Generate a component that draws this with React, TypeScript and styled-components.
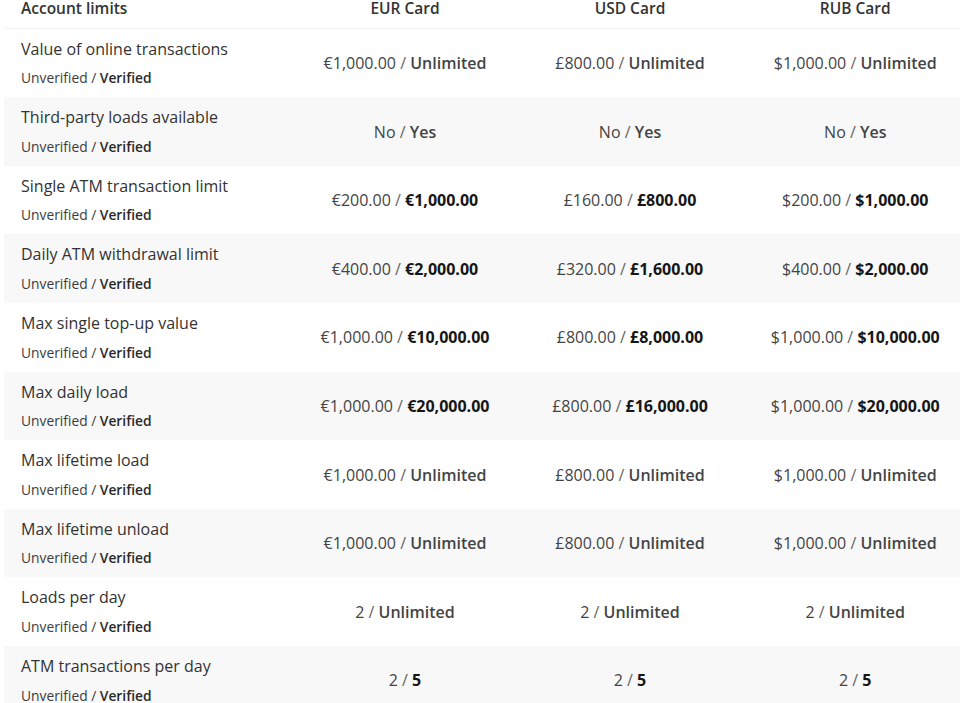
import React from "react";
import styled, { createGlobalStyle } from "styled-components";

const Global = createGlobalStyle`
  html, body { margin: 0; padding: 0; background: #ffffff; }
  body { overflow: hidden; font-family: "Open Sans", "Liberation Sans", sans-serif; }
`;

const Page = styled.div`
  width: 960px;
  height: 703px;
  overflow: hidden;
  padding-left: 4px;
  box-sizing: border-box;
`;

const Table = styled.div`
  width: 964px;
  display: grid;
  grid-template-columns: 288.5px 225px 225px 225.5px;
`;

const HeadCell = styled.div<{ $left?: boolean }>`
  height: 27.7px;
  border-bottom: 1px solid #f1f1f1;
  box-sizing: content-box;
  display: flex;
  align-items: flex-start;
  justify-content: ${(p) => (p.$left ? "flex-start" : "center")};
  padding-left: ${(p) => (p.$left ? "17px" : "0")};
  font-size: 15.5px;
  line-height: 17px;
  font-weight: 600;
  color: #333;
`;

const Row = styled.div<{ $alt: boolean }>`
  display: contents;
  & > div {
    background: ${(p) => (p.$alt ? "#f8f8f8" : "#ffffff")};
  }
`;

const LabelCell = styled.div`
  height: 68.6px;
  box-sizing: border-box;
  padding: 10px 0 0 17px;
  display: flex;
  flex-direction: column;
  gap: 9.5px;
`;

const Label = styled.div`
  font-size: 16px;
  line-height: 20px;
  color: #333;
`;

const Sub = styled.div`
  font-size: 13.8px;
  line-height: 20px;
  color: #3c3c3c;
  & b { font-weight: 600; color: #2a2a2a; }
`;

const ValueCell = styled.div`
  height: 68.6px;
  display: flex;
  align-items: center;
  justify-content: center;
  font-size: 16px;
  color: #444;
  white-space: pre;
`;

const Slash = styled.span`
  color: #666;
`;

const Strong = styled.span<{ $bold: boolean }>`
  font-weight: ${(p) => (p.$bold ? 700 : 600)};
  color: ${(p) => (p.$bold ? "#161616" : "#444")};
`;

type V = [string, string, boolean];

const rows: { label: string; vals: V[] }[] = [
  {
    label: "Value of online transactions",
    vals: [
      ["€1,000.00", "Unlimited", false],
      ["£800.00", "Unlimited", false],
      ["$1,000.00", "Unlimited", false],
    ],
  },
  {
    label: "Third-party loads available",
    vals: [
      ["No", "Yes", false],
      ["No", "Yes", false],
      ["No", "Yes", false],
    ],
  },
  {
    label: "Single ATM transaction limit",
    vals: [
      ["€200.00", "€1,000.00", true],
      ["£160.00", "£800.00", true],
      ["$200.00", "$1,000.00", true],
    ],
  },
  {
    label: "Daily ATM withdrawal limit",
    vals: [
      ["€400.00", "€2,000.00", true],
      ["£320.00", "£1,600.00", true],
      ["$400.00", "$2,000.00", true],
    ],
  },
  {
    label: "Max single top-up value",
    vals: [
      ["€1,000.00", "€10,000.00", true],
      ["£800.00", "£8,000.00", true],
      ["$1,000.00", "$10,000.00", true],
    ],
  },
  {
    label: "Max daily load",
    vals: [
      ["€1,000.00", "€20,000.00", true],
      ["£800.00", "£16,000.00", true],
      ["$1,000.00", "$20,000.00", true],
    ],
  },
  {
    label: "Max lifetime load",
    vals: [
      ["€1,000.00", "Unlimited", false],
      ["£800.00", "Unlimited", false],
      ["$1,000.00", "Unlimited", false],
    ],
  },
  {
    label: "Max lifetime unload",
    vals: [
      ["€1,000.00", "Unlimited", false],
      ["£800.00", "Unlimited", false],
      ["$1,000.00", "Unlimited", false],
    ],
  },
  {
    label: "Loads per day",
    vals: [
      ["2", "Unlimited", false],
      ["2", "Unlimited", false],
      ["2", "Unlimited", false],
    ],
  },
  {
    label: "ATM transactions per day",
    vals: [
      ["2", "5", true],
      ["2", "5", true],
      ["2", "5", true],
    ],
  },
];

export default function App() {
  return (
    <Page>
      <Global />
      <Table>
        <HeadCell $left>Account limits</HeadCell>
        <HeadCell>EUR Card</HeadCell>
        <HeadCell>USD Card</HeadCell>
        <HeadCell>RUB Card</HeadCell>
        {rows.map((r, i) => (
          <Row key={r.label} $alt={i % 2 === 1}>
            <LabelCell>
              <Label>{r.label}</Label>
              <Sub>
                Unverified / <b>Verified</b>
              </Sub>
            </LabelCell>
            {r.vals.map(([a, b, bold], j) => (
              <ValueCell key={j}>
                {a}
                <Slash>{" / "}</Slash>
                <Strong $bold={bold}>{b}</Strong>
              </ValueCell>
            ))}
          </Row>
        ))}
      </Table>
    </Page>
  );
}
